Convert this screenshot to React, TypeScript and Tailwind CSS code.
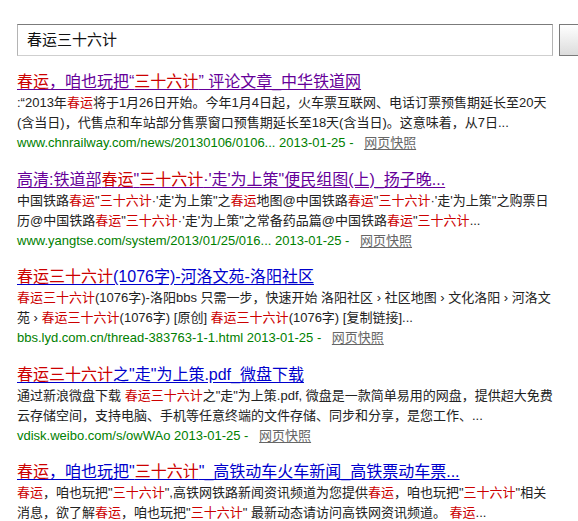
import React from "react";

type Seg = string | { em: string };

interface Result {
  visited: boolean;
  title: Seg[];
  lines: Seg[][];
  url?: string;
}

const results: Result[] = [
  {
    visited: true,
    title: [{ em: "春运" }, "，咱也玩把“", { em: "三十六计" }, "” 评论文章_中华铁道网"],
    lines: [
      [":“2013年", { em: "春运" }, "将于1月26日开始。今年1月4日起，火车票互联网、电话订票预售期延长至20天"],
      ["(含当日)，代售点和车站部分售票窗口预售期延长至18天(含当日)。这意味着，从7日..."],
    ],
    url: "www.chnrailway.com/news/20130106/0106... 2013-01-25 - ",
  },
  {
    visited: true,
    title: ["高清:铁道部", { em: "春运" }, "\"", { em: "三十六计" }, "·'走'为上策\"便民组图(上)_扬子晚..."],
    lines: [
      ["中国铁路", { em: "春运" }, "\"", { em: "三十六计" }, "·'走'为上策\"之", { em: "春运" }, "地图@中国铁路", { em: "春运" }, "\"", { em: "三十六计" }, "·'走'为上策\"之购票日"],
      ["历@中国铁路", { em: "春运" }, "\"", { em: "三十六计" }, "·'走'为上策\"之常备药品篇@中国铁路", { em: "春运" }, "\"", { em: "三十六计" }, "..."],
    ],
    url: "www.yangtse.com/system/2013/01/25/016... 2013-01-25 - ",
  },
  {
    visited: false,
    title: [{ em: "春运三十六计" }, "(1076字)-河洛文苑-洛阳社区"],
    lines: [
      [{ em: "春运三十六计" }, "(1076字)-洛阳bbs 只需一步，快速开始 洛阳社区 › 社区地图 › 文化洛阳 › 河洛文"],
      ["苑 › ", { em: "春运三十六计" }, "(1076字) [原创] ", { em: "春运三十六计" }, "(1076字) [复制链接]..."],
    ],
    url: "bbs.lyd.com.cn/thread-383763-1-1.html 2013-01-25 - ",
  },
  {
    visited: false,
    title: [{ em: "春运三十六计" }, "之\"走\"为上策.pdf_微盘下载"],
    lines: [
      ["通过新浪微盘下载 ", { em: "春运三十六计" }, "之\"走\"为上策.pdf, 微盘是一款简单易用的网盘，提供超大免费"],
      ["云存储空间，支持电脑、手机等任意终端的文件存储、同步和分享，是您工作、..."],
    ],
    url: "vdisk.weibo.com/s/owWAo 2013-01-25 - ",
  },
  {
    visited: false,
    title: [{ em: "春运" }, "，咱也玩把\"", { em: "三十六计" }, "\"_高铁动车火车新闻_高铁票动车票..."],
    lines: [
      [{ em: "春运" }, "，咱也玩把\"", { em: "三十六计" }, "\",高铁网铁路新闻资讯频道为您提供", { em: "春运" }, "，咱也玩把\"", { em: "三十六计" }, "\"相关"],
      ["消息，欲了解", { em: "春运" }, "，咱也玩把\"", { em: "三十六计" }, "\" 最新动态请访问高铁网资讯频道。 ", { em: "春运" }, "..."],
    ],
  },
];

function Segs({ segs, em }: { segs: Seg[]; em: string }) {
  return (
    <>
      {segs.map((s, i) =>
        typeof s === "string" ? (
          <span key={i}>{s}</span>
        ) : (
          <span key={i} className={em}>
            {s.em}
          </span>
        )
      )}
    </>
  );
}

export default function App() {
  return (
    <div
      className="w-[578px] h-[521px] overflow-hidden bg-white text-black"
      style={{ fontFamily: '"Liberation Sans", Arial, "Noto Sans CJK SC", sans-serif' }}
    >
      <div className="flex items-stretch gap-[6px] pl-[17px] pt-[24px]">
        <div className="w-[536px] h-[32px] shrink-0 border border-[#b4b4b4] border-t-[#7b7b7b] border-b-[#cfcfcf] bg-white flex items-center pl-[9px] text-[15px] text-[#111]">
          春运三十六计
        </div>
        <div className="w-[40px] h-[32px] shrink-0 border border-[#7a7a7a] border-r-0 bg-gradient-to-b from-white to-[#dcdcdc]" />
      </div>

      <div className="pl-[17px] pt-[15px]">
        {results.map((r, i) => {
          const link = r.visited ? "text-[#660099] decoration-[#660099]" : "text-[#0000cc] decoration-[#0000cc]";
          return (
            <div key={i} className="mb-[16.5px] whitespace-nowrap">
              <div className="h-[22px] leading-[22px] text-[16px]">
                <a className={`underline underline-offset-[2px] ${link}`}>
                  <Segs segs={r.title} em="text-[#cc0000] decoration-[#cc0000]" />
                </a>
              </div>
              {r.lines.map((l, j) => (
                <div key={j} className="h-[20px] leading-[20px] text-[13px] text-[#222]">
                  <Segs segs={l} em="text-[#cc0000]" />
                </div>
              ))}
              {r.url && (
                <div className="h-[19px] leading-[19px] text-[13px] text-[#008000]">
                  {r.url}
                  <a className="text-[#666] underline underline-offset-[2px] ml-[7px]">网页快照</a>
                </div>
              )}
            </div>
          );
        })}
      </div>
    </div>
  );
}
